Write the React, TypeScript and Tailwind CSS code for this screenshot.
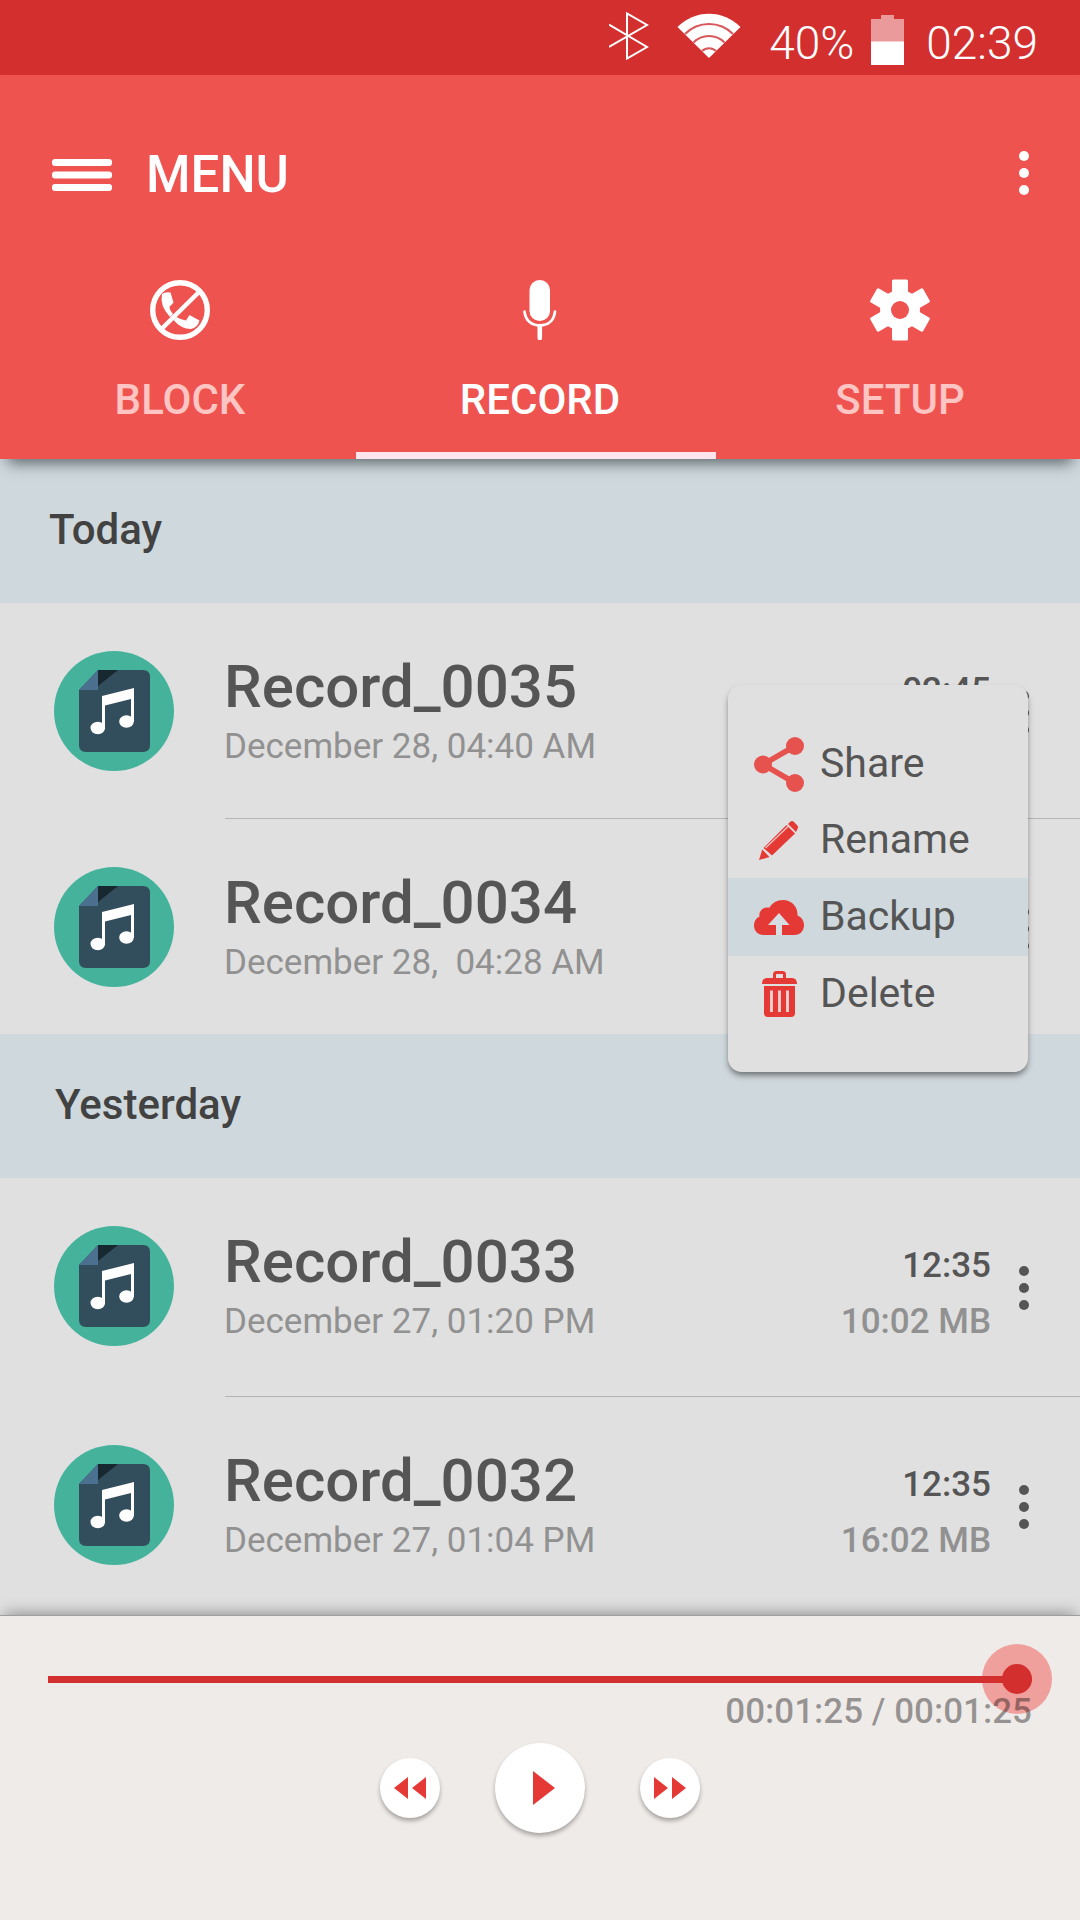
import { useState } from "react";
import type { ReactNode } from "react";

function BluetoothIcon() {
  return (
    <svg width="40" height="50" viewBox="0 0 40 50" fill="none" stroke="#fff" strokeWidth="2" aria-hidden="true">
      <path d="M0 13.5 38 36 18 47.5V2.5L38 14 0 36" />
    </svg>
  );
}

function WifiIcon() {
  return (
    <svg width="64" height="46" viewBox="0 0 64 46" aria-hidden="true">
      <path d="M32 45 .5 14A44 44 0 0 1 63.5 14Z" fill="#fff" />
      <g fill="none" stroke="#d8575a" strokeWidth="2">
        <path d="M8 21A34 34 0 0 1 56 21" />
        <path d="M16.500 29.500A22 22 0 0 1 47.500 29.500" />
        <path d="M25 38A10 10 0 0 1 39 38" />
      </g>
    </svg>
  );
}

function BatteryIcon() {
  return (
    <svg width="33" height="50" viewBox="0 0 33 50" aria-hidden="true">
      <path d="M10 0H23V4H33V27H0V4H10Z" fill="#ea9a9a" />
      <rect y="26.500" width="33" height="23.500" fill="#fff" />
    </svg>
  );
}

function Dots({ fill }: { fill: string }) {
  return (
    <svg width="10" height="44" viewBox="0 0 10 44" fill={fill} aria-hidden="true">
      <circle cx="5" cy="5" r="5" />
      <circle cx="5" cy="22" r="5" />
      <circle cx="5" cy="39" r="5" />
    </svg>
  );
}

function BlockIcon() {
  return (
    <svg width="60" height="60" viewBox="0 0 60 60" fill="#fff" aria-hidden="true">
      <circle cx="30" cy="30" r="27.300" fill="none" stroke="#fff" strokeWidth="5.400" />
      <path d="M49.500 11.500 12 48.500" stroke="#fff" strokeWidth="4.500" />
      <path d="M12 14Q15 11.500 20.500 12.500L23.500 22.500Q22 24.500 19.500 26.500 19.500 30 23 34L20 37Q9.500 26 12 14Z" />
      <path d="M23.500 40 26.500 37Q31 40 36 40.500L39.500 35 49.500 40.500Q47.500 48 41 49 31 49 23.500 40Z" />
    </svg>
  );
}

function MicIcon() {
  return (
    <svg width="60" height="60" viewBox="0 0 60 60" aria-hidden="true">
      <rect x="19.500" y="0" width="20.500" height="41" rx="10" fill="#fff" />
      <path d="M14.500 31.500C15.500 41 22 45.500 29.800 45.500S44 41 45 31.500" fill="none" stroke="#fff" strokeWidth="2.700" strokeLinecap="round" />
      <path d="M29.800 46V58" stroke="#fff" strokeWidth="4.600" strokeLinecap="round" />
    </svg>
  );
}

function GearIcon() {
  return (
    <svg width="62" height="62" viewBox="-31 -31 62 62" fill="#fff" aria-hidden="true">
      <circle r="20" />
      {[0, 60, 120].map((angle) => (
        <rect key={angle} x="-8" y="-30.500" width="16" height="61" rx="1.500" transform={`rotate(${angle})`} />
      ))}
      <circle r="9" fill="#ef5350" />
    </svg>
  );
}

function MusicFileIcon() {
  return (
    <svg className="shrink-0" width="120" height="120" viewBox="0 0 120 120" aria-hidden="true">
      <circle cx="60" cy="60" r="60" fill="#45b39c" />
      <path d="M44 19H89Q96 19 96 26V94Q96 101 89 101H32Q25 101 25 94V39Z" fill="#324d5c" />
      <path d="M44 19H64L44 35Z" fill="#182830" />
      <path d="M44 19V39H25Z" fill="#4c7090" />
      <g fill="#fff">
        <path d="M48 45 80 37V71H77V48L51 54.500V77H48Z" />
        <ellipse cx="43.800" cy="77" rx="7.300" ry="6.200" />
        <ellipse cx="72.500" cy="70.500" rx="7.300" ry="6.200" />
      </g>
    </svg>
  );
}

function ShareIcon() {
  return (
    <svg width="50" height="55" viewBox="0 0 50 55" fill="#e6524d" aria-hidden="true">
      <path d="M41 9 9 27.500 41 46" fill="none" stroke="#e6524d" strokeWidth="5.500" />
      <circle cx="41" cy="9" r="9" />
      <circle cx="9" cy="27.500" r="9" />
      <circle cx="41" cy="46" r="9" />
    </svg>
  );
}

function PencilIcon() {
  return (
    <svg width="40" height="40" viewBox="0 0 40 40" fill="#e53935" aria-hidden="true">
      <path d="M0 40 3.300 29.500 10.500 37Z" />
      <path d="M4.500 28 27.500 5 36 13.500 13 35.500Z" />
      <path d="M29 4 31 2Q33 0 35 2L38 5Q40 7 38.500 9L37 12Z" />
      <path d="M6.500 28 29 6.500" stroke="#f4c6c3" strokeWidth="1.300" />
    </svg>
  );
}

function CloudIcon() {
  return (
    <svg width="50" height="35" viewBox="0 0 50 35" aria-hidden="true">
      <path
        d="M9.500 35C4 35 0 31 0 25.500 0 21 2 18 5.500 16.500 4.500 11 9 6.500 15.500 7.800 18 3 23 0 29 0 38 0 44 7 43.500 15.500 47.500 17 50 21 50 25 50 31 46 35 40.500 35Z"
        fill="#e53935"
      />
      <path d="M25 13 35.500 25H28V35H22V25H14Z" fill="#d6dee1" />
    </svg>
  );
}

function TrashIcon() {
  return (
    <svg width="35" height="46" viewBox="0 0 35 46" fill="#e53935" aria-hidden="true">
      <path d="M12.500 8V3.500Q12.500 1.500 14.500 1.500H20.500Q22.500 1.500 22.500 3.500V8" fill="none" stroke="#e53935" strokeWidth="3" />
      <path d="M0 13Q0 7 5 7H30Q35 7 35 13Z" />
      <path d="M2 15H33V42Q33 46 29 46H6Q2 46 2 42Z" />
      <path d="M9.500 19.500V41M17.500 19.500V41M25.500 19.500V41" stroke="#e8d5d4" strokeWidth="2.800" />
    </svg>
  );
}

type Tab = { id: string; label: string; icon: ReactNode };

const tabs: Tab[] = [
  { id: "block", label: "BLOCK", icon: <BlockIcon /> },
  { id: "record", label: "RECORD", icon: <MicIcon /> },
  { id: "setup", label: "SETUP", icon: <GearIcon /> },
];

const menuItems = [
  { label: "Share", icon: <ShareIcon /> },
  { label: "Rename", icon: <PencilIcon /> },
  { label: "Backup", icon: <CloudIcon /> },
  { label: "Delete", icon: <TrashIcon /> },
];

type Recording = { name: string; date: string; time?: string; size?: string };

const groups: { title: string; inset: string; rowPadding: string; items: Recording[] }[] = [
  {
    title: "Today",
    inset: "pl-[49px]",
    rowPadding: "pt-12 pb-[43px]",
    items: [
      { name: "Record_0035", date: "December 28, 04:40 AM", time: "02:45" },
      { name: "Record_0034", date: "December 28,  04:28 AM" },
    ],
  },
  {
    title: "Yesterday",
    inset: "pl-[55px]",
    rowPadding: "pt-12 pb-[46px]",
    items: [
      { name: "Record_0033", date: "December 27, 01:20 PM", time: "12:35", size: "10:02 MB" },
      { name: "Record_0032", date: "December 27, 01:04 PM", time: "12:35", size: "16:02 MB" },
    ],
  },
];

function StatusBar() {
  return (
    <div className="flex h-[75px] items-center justify-end bg-[#d32f2f] pr-[42px] text-[46px] font-light text-white">
      <div className="flex items-center gap-7 pb-1">
        <BluetoothIcon />
        <WifiIcon />
      </div>
      <span className="pt-[11px] pl-7">40%</span>
      <div className="pt-1 pr-[22px] pl-[17px]">
        <BatteryIcon />
      </div>
      <span className="pt-[11px]">02:39</span>
    </div>
  );
}

function Header({ active, onSelect }: { active: string; onSelect: (id: string) => void }) {
  return (
    <header className="relative z-10 bg-[#ef5350] text-white shadow-[0_12px_14px_-8px_rgba(40,50,55,0.7)]">
      <div className="flex h-[196px] items-center justify-between pr-[51px] pl-[52px]">
        <button type="button" className="flex items-center gap-[34px] pt-1">
          <svg width="60" height="32" viewBox="0 0 60 32" fill="#fff" aria-hidden="true">
            <rect width="60" height="7" rx="3" />
            <rect y="12.500" width="60" height="7" rx="3" />
            <rect y="25" width="60" height="7" rx="3" />
          </svg>
          <span className="text-[51px] font-medium">MENU</span>
        </button>
        <button type="button" aria-label="More options">
          <Dots fill="#fff" />
        </button>
      </div>
      <nav className="relative grid grid-cols-3">
        {tabs.map((tab) => (
          <button
            key={tab.id}
            type="button"
            onClick={() => onSelect(tab.id)}
            className={`flex flex-col items-center pt-2 pb-[38px] text-[42px] leading-[42px] font-medium ${
              tab.id === active ? "text-white" : "text-[#ffc5c3]"
            }`}
          >
            <span className="flex h-[62px] items-center">{tab.icon}</span>
            <span className="pt-[38px]">{tab.label}</span>
          </button>
        ))}
        <span className="absolute bottom-0 left-[33%] h-[7px] w-1/3 bg-[#fce4ec]" />
      </nav>
    </header>
  );
}

function ContextMenu() {
  return (
    <div
      role="menu"
      className="absolute top-[82px] right-[52px] z-10 w-[300px] rounded-[14px] bg-[#e0e0e0] pt-[41px] pb-10 shadow-[0_4px_6px_-1px_rgba(0,0,0,0.5)]"
    >
      {menuItems.map((item) => (
        <button
          key={item.label}
          type="button"
          role="menuitem"
          className={`flex w-full items-center gap-4 pl-[26px] text-[41px] text-[#555] ${
            item.label === "Backup" ? "h-[78px] bg-[#cfd8dc]" : "h-[76px]"
          }`}
        >
          <span className="flex w-[50px] justify-center">{item.icon}</span>
          {item.label}
        </button>
      ))}
    </div>
  );
}

function RecordingRow({ item, padding, menuOpen }: { item: Recording; padding: string; menuOpen: boolean }) {
  return (
    <li className={`relative flex pr-[51px] pl-[54px] ${padding}`}>
      <MusicFileIcon />
      <div className="flex-1 pt-1 pl-[50px]">
        <h3 className="text-6xl leading-[64px] font-medium text-[#555]">{item.name}</h3>
        <p className="text-[35px] leading-[56px] whitespace-pre text-[#919191]">{item.date}</p>
      </div>
      <div className="pt-3 text-right text-[35px] leading-[56px] font-medium">
        <p className="text-[#555]">{item.time}</p>
        <p className="text-[#919191]">{item.size}</p>
      </div>
      <button type="button" aria-label={`Options for ${item.name}`} className="pl-[28px]">
        <Dots fill="#555" />
      </button>
      {menuOpen && <ContextMenu />}
    </li>
  );
}

function Player() {
  const total = 85;
  const [position, setPosition] = useState(total);
  const format = (s: number) =>
    `00:${String(Math.floor(s / 60)).padStart(2, "0")}:${String(s % 60).padStart(2, "0")}`;
  const ratio = position / total;

  return (
    <footer className="relative flex-1 border-t border-[#9e9e9e] bg-[#efebe9] pt-12 pr-12 pl-12 shadow-[0_-6px_14px_-4px_rgba(0,0,0,0.35)]">
      <div className="relative flex h-[30px]">
        <span
          className="absolute -top-5 size-[70px] rounded-full bg-[#ef5350]/50"
          style={{ left: `calc(${ratio} * (100% - 30px) - 20px)` }}
        />
        <input
          type="range"
          aria-label="Playback position"
          min={0}
          max={total}
          value={position}
          onChange={(e) => setPosition(Number(e.target.value))}
          className="relative h-[30px] w-full appearance-none bg-transparent [&::-webkit-slider-runnable-track]:h-[7px] [&::-webkit-slider-runnable-track]:rounded-r-full [&::-webkit-slider-runnable-track]:bg-[#d32f2f] [&::-webkit-slider-thumb]:-mt-[12px] [&::-webkit-slider-thumb]:size-[30px] [&::-webkit-slider-thumb]:appearance-none [&::-webkit-slider-thumb]:rounded-full [&::-webkit-slider-thumb]:bg-[#d32f2f]"
        />
      </div>
      <p className="relative text-right text-[35px] leading-9 font-medium text-black/38">
        {format(position)} / {format(total)}
      </p>
      <div className="flex items-center justify-center gap-[55px] pt-[13px]">
        <button type="button" aria-label="Rewind" className="flex size-[60px] items-center justify-center rounded-full bg-white shadow-[0_3px_4px_rgba(0,0,0,0.3)]">
          <svg width="32" height="22" viewBox="0 0 32 22" fill="#e53935" aria-hidden="true">
            <path d="M14 0V22L0 11ZM32 0V22L18 11Z" />
          </svg>
        </button>
        <button type="button" aria-label="Play" className="flex size-[90px] items-center justify-center rounded-full bg-white pl-2 shadow-[0_3px_4px_rgba(0,0,0,0.3)]">
          <svg width="22" height="34" viewBox="0 0 22 34" fill="#e53935" aria-hidden="true">
            <path d="M0 0 22 17 0 34Z" />
          </svg>
        </button>
        <button type="button" aria-label="Fast forward" className="flex size-[60px] items-center justify-center rounded-full bg-white shadow-[0_3px_4px_rgba(0,0,0,0.3)]">
          <svg width="32" height="22" viewBox="0 0 32 22" fill="#e53935" aria-hidden="true">
            <path d="M0 0 14 11 0 22ZM18 0 32 11 18 22Z" />
          </svg>
        </button>
      </div>
    </footer>
  );
}

export default function App() {
  const [active, setActive] = useState("record");

  return (
    <div className="flex min-h-screen flex-col bg-[#e0e0e0] font-['Roboto',sans-serif]">
      <StatusBar />
      <Header active={active} onSelect={setActive} />
      <main>
        {groups.map((group) => (
          <section key={group.title}>
            <h2 className={`flex h-36 items-center bg-[#cfd8dc] pb-1 text-[42px] font-medium text-[#424242] ${group.inset}`}>
              {group.title}
            </h2>
            <ul>
              {group.items.map((item, index) => (
                <div key={item.name} className="contents">
                  {index > 0 && <li role="presentation" className="ml-[225px] h-px bg-[#b5b5b5]" />}
                  <RecordingRow item={item} padding={group.rowPadding} menuOpen={item.name === "Record_0035"} />
                </div>
              ))}
            </ul>
          </section>
        ))}
      </main>
      <Player />
    </div>
  );
}
